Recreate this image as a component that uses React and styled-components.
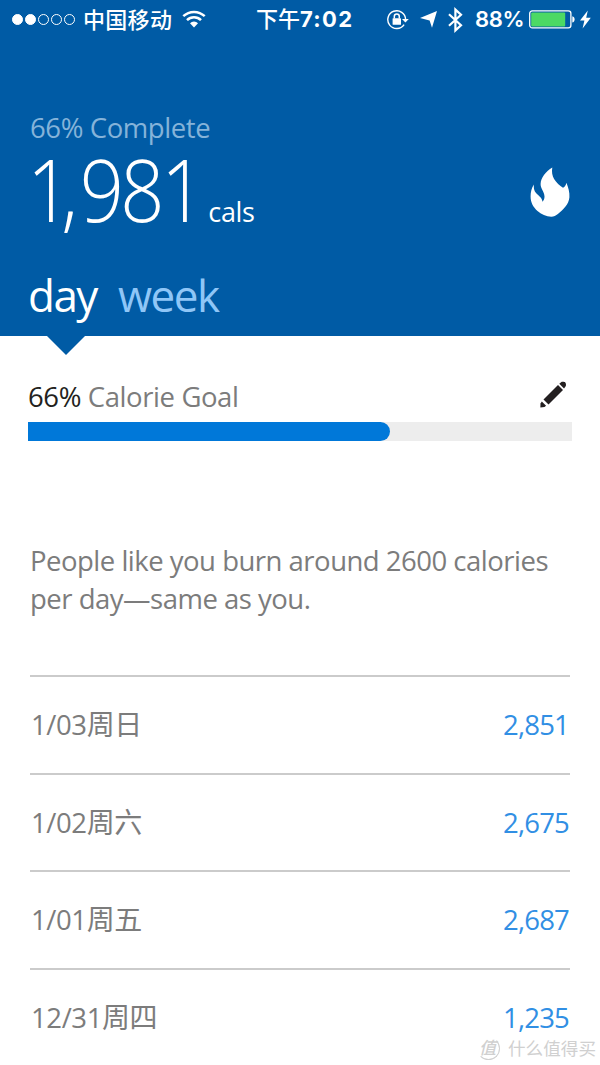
import styled, { createGlobalStyle } from "styled-components";

const history = [
  { date: "1/03", day: "周日", cals: "2,851" },
  { date: "1/02", day: "周六", cals: "2,675" },
  { date: "1/01", day: "周五", cals: "2,687" },
  { date: "12/31", day: "周四", cals: "1,235" },
];

const WifiIcon = () => (
  <svg width="24" height="19" viewBox="0 0 24 19" fill="none" stroke="#fff">
    <path d="M1.300 6.200a15.400 15.400 0 0 1 21.400 0" strokeWidth="2.500" />
    <path d="M5 10.200a10 10 0 0 1 14 0" strokeWidth="2.500" />
    <path d="M8 13.200a5.700 5.700 0 0 1 8 0L12 17.600z" fill="#fff" stroke="none" />
  </svg>
);

const LockIcon = () => (
  <svg width="22" height="20" viewBox="0 0 22 20" fill="none" stroke="#fff">
    <path d="M17.100 14.600a8.900 8.900 0 1 1 1.500-5.200" strokeWidth="1.400" />
    <path d="M15 9h6.800l-3.400 3.600z" fill="#fff" stroke="none" />
    <rect x="5.600" y="8.200" width="8.400" height="6.600" rx=".6" fill="#fff" stroke="none" />
    <path d="M7.300 8.400V6.500a2.500 2.500 0 0 1 5 0v1.900" strokeWidth="1.500" />
  </svg>
);

const ArrowIcon = () => (
  <svg width="17" height="17" viewBox="0 0 17 17" fill="#fff">
    <path d="M17 0 12 16.800 9.600 9.400 0 7z" />
  </svg>
);

const BluetoothIcon = () => (
  <svg width="15" height="26" viewBox="0 0 15 26" fill="none" stroke="#fff">
    <path d="M1 7.300 13 18.300 7.400 23.400V2.600L13 7.700 1 18.700" strokeWidth="2.200" />
  </svg>
);

const BatteryIcon = () => (
  <svg width="46" height="19" viewBox="0 0 46 19" fill="none">
    <rect x=".7" y=".9" width="41.200" height="17" rx="2.600" stroke="#fff" strokeWidth="1.300" />
    <rect x="2.200" y="2.400" width="34" height="14" rx="1" fill="#4cd964" />
    <path d="M43.300 6.300c1.500.3 2.300 1.600 2.300 3.100s-.8 2.800-2.300 3.100z" fill="#fff" />
  </svg>
);

const BoltIcon = () => (
  <svg width="11" height="19" viewBox="0 0 11 19" fill="#fff">
    <path d="M7.800.4 0 10.600h4.400L2.600 18.400 10.800 7.800H6.200z" />
  </svg>
);

const FlameIcon = () => (
  <svg width="40" height="51" viewBox="0 0 40 51" fill="#fff">
    <path d="M22.300.5C16 4.200 10.800 10.500 10.600 17c-.1 4.500 3.900 8 3.900 12.500 0 2.300-.6 3.800-2 5.200-.5-4.800-5.300-6.500-7.600-10.200-1.100-1.900-1.200-4.400-1-6.900C1.500 21.200.6 25.200.6 29.500c0 6 2.400 10.300 6.900 14.600 3.600 3.400 8.800 5.600 13.800 5.600 2.400 0 4.700-1.200 6.600-2.700 5.500-4.300 11-9.800 11.500-16.700.4-5.400-1.200-9.800-3-14.600-.5 2.200-1.500 4.400-3.400 5.100-3.300-2.100-6.800-5.200-8.900-8.800-1.800-3.200-2.600-7.100-1.800-11.500z" />
  </svg>
);

const PencilIcon = () => (
  <svg width="27" height="27" viewBox="0 0 27 27" fill="#231f20">
    <path d="M18 4 23 9 8.500 23.500 3.500 18.500z" />
    <path d="M19.300 2.800 21.100 1.200c.6-.6 3.500-.6 4.200.2.900.9.900 3.400.2 4.200L24 7.500z" />
    <path d="M1.800 20.500 6.100 24.800 4.500 26.100.4 26.400.5 22.500z" />
  </svg>
);

const App = () => {
  return (
    <Screen>
      <GlobalStyle />
      <Header>
        <StatusBar>
          <Carrier>
            <Signal>
              <Dot $full />
              <Dot $full />
              <Dot />
              <Dot />
              <Dot />
            </Signal>
            <CarrierName>中国移动</CarrierName>
            <WifiIcon />
          </Carrier>
          <Time>
            下午<b>7:02</b>
          </Time>
          <Indicators>
            <LockIcon />
            <ArrowIcon />
            <BluetoothIcon />
            <Percent>88%</Percent>
            <BatteryIcon />
            <BoltIcon />
          </Indicators>
        </StatusBar>
        <Summary>
          <div>
            <Complete>66% Complete</Complete>
            <Total>
              <Amount>
                1<Comma>,</Comma>981
              </Amount>
              <Unit>cals</Unit>
            </Total>
          </div>
          <FlameIcon />
        </Summary>
        <Tabs>
          <Tab $active>day</Tab>
          <Tab>week</Tab>
        </Tabs>
      </Header>
      <Goal>
        <GoalTitle>
          <GoalText>
            <span>66%</span> Calorie Goal
          </GoalText>
          <PencilIcon />
        </GoalTitle>
        <Track>
          <Progress style={{ width: "66.6%" }} />
        </Track>
      </Goal>
      <Insight>
        People like you burn around 2600 calories
        <br />
        per day—same as you.
      </Insight>
      <List>
        {history.map((item) => (
          <Row key={item.date}>
            <RowDate>
              {item.date}
              <Weekday>{item.day}</Weekday>
            </RowDate>
            <RowCals>{item.cals}</RowCals>
          </Row>
        ))}
      </List>
      <Watermark>
        <Seal>值</Seal>
        什么值得买
      </Watermark>
    </Screen>
  );
};

export default App;

const GlobalStyle = createGlobalStyle`
  * {
    box-sizing: border-box;
  }

  body {
    margin: 0;
    background: #fff;
  }

  svg {
    display: block;
    flex-shrink: 0;
  }
`;

const Screen = styled.div`
  position: relative;
  width: 600px;
  height: 1065px;
  overflow: hidden;
  background: #fff;
  color: #7c7c7c;
  font-family: "Open Sans", "Noto Sans CJK SC", sans-serif;
  font-size: 27.5px;
  font-weight: 380;
  letter-spacing: -0.4px;
  white-space: nowrap;
`;

const Header = styled.header`
  position: relative;
  height: 335.5px;
  background: #005ba5;
  color: #fff;

  &::after {
    content: "";
    position: absolute;
    top: 100%;
    left: 46.5px;
    border: 19px solid transparent;
    border-top-color: #005ba5;
    border-bottom: 0;
  }
`;

const StatusBar = styled.div`
  display: grid;
  grid-template-columns: 256px 131px 1fr;
  height: 39px;
  font-family: Inter, "Noto Sans CJK SC", sans-serif;
  font-size: 22px;
  letter-spacing: 0;
  line-height: 38px;
`;

const Carrier = styled.div`
  display: flex;
  align-items: center;
  padding-left: 12px;
`;

const Signal = styled.div`
  display: flex;
  gap: 2px;
`;

const Dot = styled.span`
  width: 11px;
  height: 11px;
  border: 1px solid #fff;
  border-radius: 50%;
  background: ${(props) => (props.$full ? "#fff" : "transparent")};
`;

const CarrierName = styled.span`
  margin: 0 10px 0 8px;
  font-weight: 500;
  letter-spacing: 0.3px;
`;

const Time = styled.div`
  font-weight: 500;

  b {
    font-weight: 700;
    letter-spacing: 1.3px;
  }
`;

const Indicators = styled.div`
  display: flex;
  align-items: center;

  svg:nth-of-type(2) {
    margin: 0 11px;
  }

  svg:last-child {
    margin-left: 5px;
  }
`;

const Percent = styled.span`
  width: 66px;
  padding: 0 0 1px 12px;
  font-weight: 600;
  letter-spacing: -0.3px;
`;

const Summary = styled.div`
  display: flex;
  justify-content: space-between;
  height: 230.5px;
  padding: 70px 30px 0;

  > svg {
    margin-top: 58px;
  }
`;

const Complete = styled.div`
  height: 38px;
  color: #85b3d9;
  line-height: 38px;
`;

const Total = styled.div`
  display: flex;
  align-items: baseline;
  margin-left: -3.5px;
  line-height: 84px;
`;

/* narrower figures than the font's own */
const Amount = styled.span`
  font-size: 86px;
  font-weight: 300;
  letter-spacing: -4px;
  transform: scaleX(0.9);
  transform-origin: left;
`;

const Comma = styled.span`
  margin: 0 6px 0 -7px;
`;

const Unit = styled.span`
  margin-left: -12px;
  font-size: 27px;
`;

const Tabs = styled.nav`
  display: flex;
  gap: 21px;
  padding-left: 28px;
  letter-spacing: -1.5px;
`;

const Tab = styled.span`
  color: ${(props) => (props.$active ? "#fff" : "#8fc6f7")};
  font-size: 44px;
  line-height: 50px;
`;

const Goal = styled.section`
  padding: 42px 28px 0;
`;

const GoalTitle = styled.div`
  display: flex;
  justify-content: space-between;
  height: 44px;
  padding-right: 5px;

  svg {
    margin-top: 3px;
  }
`;

const GoalText = styled.div`
  line-height: 38px;

  span {
    color: #231f20;
  }
`;

const Track = styled.div`
  height: 19px;
  background: #ededed;
`;

const Progress = styled.div`
  height: 100%;
  border-radius: 0 9.5px 9.5px 0;
  background: #0078d9;
`;

const Insight = styled.p`
  height: 234.5px;
  margin: 0;
  padding: 101px 30px 0;
  letter-spacing: -0.5px;
  line-height: 38px;
`;

const List = styled.div`
  padding: 0 30px;
`;

const Row = styled.div`
  display: flex;
  justify-content: space-between;
  height: 97.5px;
  padding-top: 29px;
  border-top: 2px solid #cbcbcb;
  letter-spacing: -0.8px;
  line-height: 38px;
`;

const RowDate = styled.span`
  padding-left: 1px;
  letter-spacing: -0.4px;
`;

const Weekday = styled.span`
  font-size: 28px;
  letter-spacing: -0.4px;
  line-height: 1;
`;

const RowCals = styled.span`
  padding-right: 1px;
  color: #318fe4;
`;

const Watermark = styled.div`
  position: absolute;
  right: 4px;
  bottom: 5px;
  display: flex;
  align-items: center;
  gap: 8px;
  color: #d0d0d0;
  font-size: 17.6px;
  letter-spacing: 0;
  line-height: 24px;
`;

const Seal = styled.span`
  display: flex;
  justify-content: center;
  width: 23px;
  height: 23px;
  padding-right: 2px;
  border: 1.5px solid transparent;
  border-right-color: #d0d0d0;
  border-bottom-color: #d0d0d0;
  border-radius: 50%;
  font-size: 17px;
  font-style: italic;
  font-weight: 500;
  line-height: 19px;
`;
